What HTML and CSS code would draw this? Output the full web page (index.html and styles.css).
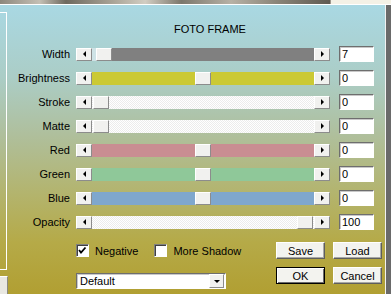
FILE: index.html
```html
<!DOCTYPE html>
<html lang="en">
<head>
  <meta charset="UTF-8" />
  <meta name="viewport" content="width=device-width, initial-scale=1.0"/>
  <title>Foto Frame</title>
  <link rel="stylesheet" href="styles.css">
</head>
<body>
<div class="screen">
  <div class="photo"><span class="photo-img"></span><span class="photo-win"></span></div>

  <div class="window">
    <div class="side">
      <div class="side-panel"></div>
      <div class="side-button"></div>
    </div>

    <div class="dialog">
      <div class="title">FOTO FRAME</div>

      <div class="rows">
        <div class="row">
          <span class="name">Width</span>
          <div class="slider">
            <span class="arrow left"></span>
            <span class="track gray"><span class="thumb" style="left: 4px"></span></span>
            <span class="arrow right"></span>
          </div>
          <input class="value" type="text" value="7">
        </div>
        <div class="row">
          <span class="name">Brightness</span>
          <div class="slider">
            <span class="arrow left"></span>
            <span class="track yellow"><span class="thumb" style="left: 103px"></span></span>
            <span class="arrow right"></span>
          </div>
          <input class="value" type="text" value="0">
        </div>
        <div class="row">
          <span class="name">Stroke</span>
          <div class="slider">
            <span class="arrow left"></span>
            <span class="track plain"><span class="thumb" style="left: 1px"></span></span>
            <span class="arrow right"></span>
          </div>
          <input class="value" type="text" value="0">
        </div>
        <div class="row">
          <span class="name">Matte</span>
          <div class="slider">
            <span class="arrow left"></span>
            <span class="track plain"><span class="thumb" style="left: 1px"></span></span>
            <span class="arrow right"></span>
          </div>
          <input class="value" type="text" value="0">
        </div>
        <div class="row">
          <span class="name">Red</span>
          <div class="slider">
            <span class="arrow left"></span>
            <span class="track red"><span class="thumb" style="left: 103px"></span></span>
            <span class="arrow right"></span>
          </div>
          <input class="value" type="text" value="0">
        </div>
        <div class="row">
          <span class="name">Green</span>
          <div class="slider">
            <span class="arrow left"></span>
            <span class="track green"><span class="thumb" style="left: 103px"></span></span>
            <span class="arrow right"></span>
          </div>
          <input class="value" type="text" value="0">
        </div>
        <div class="row">
          <span class="name">Blue</span>
          <div class="slider">
            <span class="arrow left"></span>
            <span class="track blue"><span class="thumb" style="left: 103px"></span></span>
            <span class="arrow right"></span>
          </div>
          <input class="value" type="text" value="0">
        </div>
        <div class="row">
          <span class="name">Opacity</span>
          <div class="slider">
            <span class="arrow left"></span>
            <span class="track plain"><span class="thumb" style="left: 205px"></span></span>
            <span class="arrow right"></span>
          </div>
          <input class="value" type="text" value="100">
        </div>
      </div>

      <div class="bottom">
        <div class="checks">
          <label class="check">
            <span class="box">
              <svg width="11" height="11" viewBox="0 0 11 11"><polyline points="2,5 4,7.5 8.5,2.5" fill="none" stroke="#000" stroke-width="1.8"/></svg>
            </span>
            Negative
          </label>
          <label class="check">
            <span class="box"></span>
            More Shadow
          </label>
        </div>
        <button class="btn" type="button">Save</button>
        <button class="btn" type="button">Load</button>

        <div class="select">
          <span class="select-text">Default</span>
          <span class="select-btn"></span>
        </div>
        <button class="btn default" type="button">OK</button>
        <button class="btn" type="button">Cancel</button>
      </div>
    </div>

    <div class="frame"></div>
  </div>
</div>
</body>
</html>
```

FILE: styles.css
```css
body {
  margin: 0;
  font-family: "Liberation Sans", Arial, sans-serif;
  font-size: 11px;
  color: #000;
  background: #b09c30;
}
.screen {
  width: 391px;
  height: 294px;
  display: flex;
  flex-direction: column;
  overflow: hidden;
}

/* bit of the photo window behind the dialog */
.photo {
  height: 4px;
  display: flex;
}
.photo-img {
  width: 330px;
  background: linear-gradient(90deg, #8d877c 0%, #c4bfb4 12%, #6e695f 20%, #a9a396 34%, #d2cdc2 44%, #7c776c 55%, #b7b1a5 70%, #8a8478 84%, #5f5a52 100%);
}
.photo-win {
  flex: 1;
  background: #f4f1e6;
  border-left: 1px solid #9c968c;
}

.window {
  flex: 1;
  display: flex;
  border-top: 1px solid #fff;
  background: linear-gradient(180deg, #a9d8e3 0%, #abcdc6 25%, #afbf9c 45%, #b3b46e 65%, #b5aa48 82%, #b19f32 100%);
}
.side {
  width: 8px;
  display: flex;
  flex-direction: column;
}
.side-panel {
  width: 6px;
  height: 256px;
  margin-top: 7px;
  border: 1px solid #fff;
  border-left: 0;
}
.side-button {
  flex: 1;
  margin-top: 6px;
  background: #e9e8e2;
  border-top: 1px solid #fff;
  border-right: 1px solid #8a8a80;
}
.frame {
  width: 5px;
  border-left: 1px solid #f2f2f2;
  background: #6a6a6a;
}

.dialog {
  flex: 1;
  padding-top: 18px;
}
.title {
  line-height: 13px;
  padding-left: 166px;
  margin-bottom: 6px;
}

.row {
  display: flex;
  align-items: center;
  height: 24px;
}
.name {
  width: 62px;
  margin-right: 6px;
  text-align: right;
}
.slider {
  display: flex;
  width: 254px;
  height: 13px;
}
.arrow, .thumb {
  box-sizing: border-box;
  width: 16px;
  height: 13px;
  background: #f1f1ef;
  border: 1px solid;
  border-color: #fff #8c8c8c #8c8c8c #fff;
}
.arrow {
  display: flex;
  align-items: center;
  justify-content: center;
}
.arrow::before {
  content: "";
  border: 3px solid transparent;
}
.arrow.left::before {
  border-left-width: 0;
  border-right-color: #000;
}
.arrow.right::before {
  border-right-width: 0;
  border-left-color: #000;
}
.track {
  flex: 1;
  position: relative;
}
.thumb {
  position: absolute;
  top: 0;
}
.track.gray {
  background: linear-gradient(90deg, #cfe3e6 0 4px, #808080 4px);
}
.track.yellow { background: #cbc934; }
.track.red { background: #c98d92; }
.track.green { background: #8fc899; }
.track.blue { background: #7fa7cd; }
.track.plain {
  background: repeating-conic-gradient(#ffffff 0 25%, #ececec 0 50%) 0 0 / 2px 2px;
}
.value {
  box-sizing: border-box;
  width: 35px;
  height: 16px;
  margin: 0 0 0 9px;
  padding: 0 2px;
  font: inherit;
  color: #000;
  background: #fff;
  border: 1px solid;
  border-color: #6e6e6e #fff #fff #6e6e6e;
  box-shadow: inset 1px 1px #c8c8c8;
}

.bottom {
  display: grid;
  grid-template-columns: 192px 49px 49px;
  grid-auto-rows: 17px;
  column-gap: 8px;
  row-gap: 8px;
  margin: 8px 0 0 68px;
}
.checks {
  display: flex;
  align-items: center;
}
.check {
  display: flex;
  align-items: center;
  gap: 6px;
  margin-right: 16px;
}
.box {
  box-sizing: border-box;
  width: 13px;
  height: 13px;
  background: #fff;
  border: 1px solid;
  border-color: #808080 #fff #fff #808080;
  box-shadow: inset 1px 1px #404040;
  display: flex;
}
.box svg {
  display: block;
}
.btn {
  font: inherit;
  color: #000;
  padding: 0;
  background: #f3f3ef;
  border: 1px solid;
  border-color: #fff #5e5e5e #5e5e5e #fff;
  box-shadow: inset -1px -1px #a8a8a4;
}
.btn.default {
  border-color: #000;
  box-shadow: inset 1px 1px #fff, inset -1px -1px #6a6a6a;
}
.select {
  box-sizing: border-box;
  width: 150px;
  height: 16px;
  margin-top: 6px;
  display: flex;
  align-items: center;
  justify-content: space-between;
  background: #fff;
  border: 1px solid;
  border-color: #6e6e6e #fff #fff #6e6e6e;
  box-shadow: inset 1px 1px #c8c8c8;
}
.select-text {
  padding-left: 3px;
}
.select-btn {
  box-sizing: border-box;
  width: 15px;
  height: 14px;
  margin-right: 1px;
  display: flex;
  align-items: center;
  justify-content: center;
  background: #f1f1ef;
  border: 1px solid;
  border-color: #fff #8c8c8c #8c8c8c #fff;
}
.select-btn::before {
  content: "";
  border: 3px solid transparent;
  border-bottom-width: 0;
  border-top-color: #000;
}
```
